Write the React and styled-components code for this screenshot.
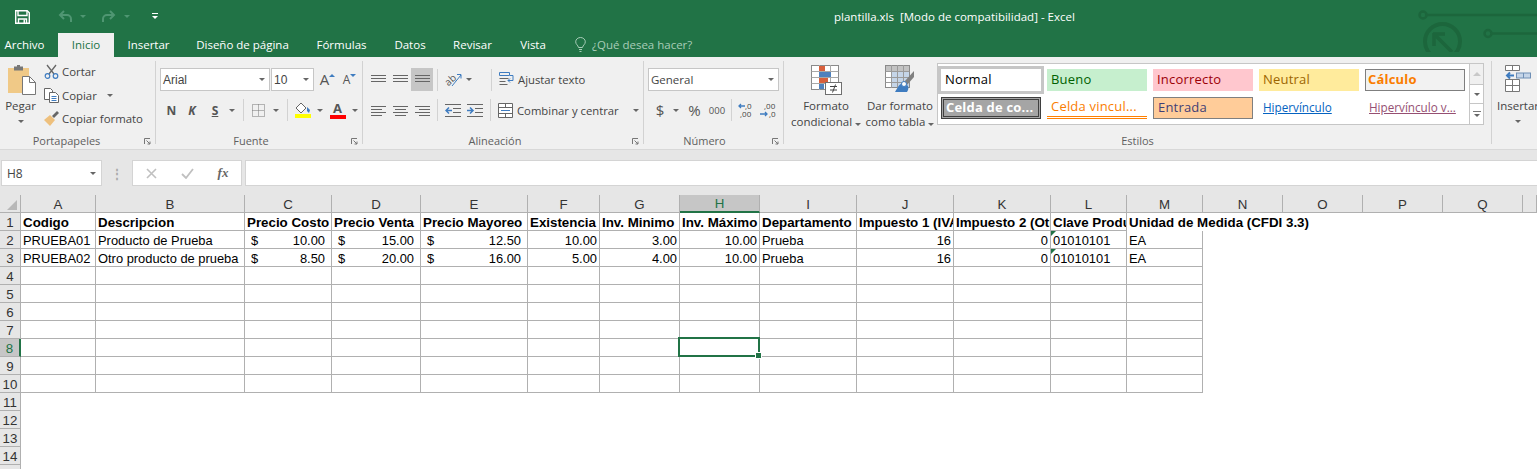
import styled, { createGlobalStyle } from "styled-components";

const UI_FONT = `"Open Sans", "Noto Sans", sans-serif`;
const CELL_FONT = `"Liberation Sans", Arial, sans-serif`;

const COLUMNS = [
  ["A", 75], ["B", 149], ["C", 87], ["D", 89], ["E", 107], ["F", 72], ["G", 80], ["H", 80], ["I", 97],
  ["J", 97], ["K", 97], ["L", 76], ["M", 76], ["N", 80], ["O", 80], ["P", 80], ["Q", 80], ["", 14],
];

const TITLES = [
  "Codigo", "Descripcion", "Precio Costo", "Precio Venta", "Precio Mayoreo", "Existencia", "Inv. Minimo",
  "Inv. Máximo", "Departamento", "Impuesto 1 (IVA)", "Impuesto 2 (Otro)", "Clave Producto", "Unidad de Medida (CFDI 3.3)",
];

const PRODUCTS = [
  ["PRUEBA01", "Producto de Prueba", "10.00", "15.00", "12.50", "10.00", "3.00", "10.00", "Prueba", "16", "0", "01010101", "EA"],
  ["PRUEBA02", "Otro producto de prueba", "8.50", "20.00", "16.00", "5.00", "4.00", "10.00", "Prueba", "16", "0", "01010101", "EA"],
];

const STYLES = [
  { label: "Normal", color: "#000", bg: "#fff", selected: true },
  { label: "Bueno", color: "#006100", bg: "#c6efce" },
  { label: "Incorrecto", color: "#9c0006", bg: "#ffc7ce" },
  { label: "Neutral", color: "#9c6500", bg: "#ffeb9c" },
  { label: "Cálculo", color: "#fa7d00", bg: "#f2f2f2", border: "1px solid #7f7f7f", bold: true, tight: true },
  { label: "Celda de co...", color: "#fff", bg: "#a5a5a5", border: "3px double #3f3f3f", bold: true, tight: true },
  { label: "Celda vincul...", color: "#fa7d00", bg: "#fff", under: "3px double #ff8001" },
  { label: "Entrada", color: "#3f3f76", bg: "#ffcc99", border: "1px solid #7f7f7f" },
  { label: "Hipervínculo", color: "#0563c1", bg: "#fff", link: true },
  { label: "Hipervínculo v...", color: "#954f72", bg: "#fff", link: true },
];

const GlobalStyle = createGlobalStyle`
  html, body {
    margin: 0;
    height: 100%;
    overflow: hidden;
    background: #e6e6e6;
  }
`;

const Page = styled.div`
  width: 1537px;
  height: 469px;
  overflow: hidden;
  background: #e6e6e6;
  font-family: ${UI_FONT};
  font-size: 11.4px;
  color: #444;
`;

const GreenHeader = styled.header`
  position: relative;
  height: 57px;
  background: #217346;
  overflow: hidden;
`;

const Circuit = styled.svg`
  position: absolute;
  right: 0;
  top: 0;
`;

const TitleBar = styled.div`
  display: flex;
  align-items: center;
  height: 33px;
  padding-left: 15px;
`;

const QuickSlot = styled.div`
  display: flex;
  align-items: center;
  margin-left: ${(p) => p.$ml || 0}px;
`;

const WindowTitle = styled.span`
  margin-left: 676px;
  color: #fff;
  font-size: 11.5px;
  white-space: pre;
`;

const Tabs = styled.nav`
  display: flex;
  height: 24px;
`;

const Tab = styled.div`
  display: flex;
  align-items: center;
  justify-content: center;
  box-sizing: border-box;
  width: ${(p) => p.$w}px;
  margin-right: ${(p) => p.$mr || 0}px;
  padding-bottom: 2px;
  font-size: 11.5px;
  color: ${(p) => (p.$active ? "#217346" : "#fff")};
  background: ${(p) => (p.$active ? "#f0f0f0" : "transparent")};
`;

const Search = styled.div`
  display: flex;
  align-items: center;
  gap: 6px;
  margin-left: 15px;
  padding-bottom: 2px;
  color: #a8cdb8;
  font-size: 11.5px;
`;

const Ribbon = styled.section`
  display: flex;
  box-sizing: border-box;
  height: 93px;
  padding: 4px 0 5px;
  background: #f0f0f0;
  border-bottom: 1px solid #d8d8d8;
`;

const Group = styled.div`
  display: flex;
  flex-direction: column;
  flex: none;
  box-sizing: border-box;
  width: ${(p) => p.$w}px;
  border-right: ${(p) => (p.$last ? "none" : "1px solid #d2d2d2")};
`;

const GroupBody = styled.div`
  display: flex;
  height: 72px;
`;

const Stack = styled.div`
  display: flex;
  flex-direction: column;
  padding: 7px 0 0 ${(p) => p.$pl || 0}px;
  gap: 7px;
`;

const GroupLabel = styled.div`
  position: relative;
  box-sizing: border-box;
  height: 12px;
  padding-right: ${(p) => p.$pr || 0}px;
  line-height: 18px;
  text-align: center;
  color: #5f5f5f;
  font-size: 11px;
`;

const Launcher = styled.svg`
  position: absolute;
  right: 4px;
  top: 6px;
`;

const BigButton = styled.div`
  display: flex;
  flex-direction: column;
  align-items: center;
  flex: none;
  width: ${(p) => p.$w}px;
  padding-top: 4px;
  line-height: 16px;
  white-space: nowrap;
  font-size: 11.5px;
`;

const BigIcon = styled.div`
  display: flex;
  align-items: flex-start;
  justify-content: center;
  height: 33px;
  margin-left: ${(p) => p.$ml || 0}px;
`;

const SmallColumn = styled.div`
  display: flex;
  flex-direction: column;
  gap: 0.5px;
  margin: -1px 0 0 3px;
`;

const SmallButton = styled.div`
  display: flex;
  align-items: center;
  gap: 3px;
  height: 23px;
  white-space: nowrap;
  font-size: 11.4px;
`;

const Row = styled.div`
  display: flex;
  align-items: center;
  height: ${(p) => p.$h || 23}px;
`;

const Slot = styled.div`
  display: flex;
  align-items: center;
  justify-content: center;
  flex: none;
  width: ${(p) => p.$w}px;
  height: 23px;
  background: ${(p) => (p.$on ? "#c6c6c6" : "transparent")};
  color: ${(p) => p.$color || "#555"};
  font-size: ${(p) => p.$size || 12}px;
  font-weight: ${(p) => (p.$bold ? 700 : 400)};
  font-style: ${(p) => (p.$italic ? "italic" : "normal")};
  text-decoration: ${(p) => (p.$under ? "underline" : "none")};
`;

const Sep = styled.div`
  flex: none;
  width: 1px;
  height: 22px;
  margin-left: ${(p) => p.$ml || 0}px;
  margin-right: ${(p) => p.$mr || 0}px;
  background: #d2d2d2;
`;

const Caret = styled.span`
  flex: none;
  display: inline-block;
  width: 0;
  height: 0;
  margin-left: ${(p) => p.$ml || 0}px;
  margin-top: ${(p) => p.$mt || 0}px;
  border-left: 3px solid transparent;
  border-right: 3px solid transparent;
  border-top: 3px solid ${(p) => p.$color || "#666"};
`;

const SizeCaret = styled.span`
  flex: none;
  width: 0;
  height: 0;
  margin-bottom: 9px;
  border-left: 3px solid transparent;
  border-right: 3px solid transparent;
  border-top: ${(p) => (p.$down ? "3px solid #3f7cc0" : "none")};
  border-bottom: ${(p) => (p.$down ? "none" : "3px solid #3f7cc0")};
`;

const Select = styled.div`
  display: flex;
  align-items: center;
  justify-content: space-between;
  flex: none;
  box-sizing: border-box;
  width: ${(p) => p.$w}px;
  height: 23px;
  margin-left: ${(p) => p.$ml || 0}px;
  padding: 0 4px 0 2px;
  background: #fff;
  border: 1px solid #c6c6c6;
  color: #444;
  font-size: 11.5px;
`;

const FontSelect = styled(Select)`
  font-family: ${CELL_FONT};
  font-size: 12px;
`;

const WideButton = styled.div`
  display: flex;
  align-items: center;
  gap: 4px;
  margin-left: 7px;
  white-space: nowrap;
  font-size: 11.3px;
`;

const WideLabel = styled.span`
  display: inline-block;
  width: ${(p) => p.$w}px;
`;

const LetterIcon = styled.span`
  color: #555;
  line-height: 1;
`;

const Swatch = styled.div`
  display: flex;
  flex-direction: column;
  align-items: center;
  width: 16px;
`;

const SwatchBar = styled.div`
  width: 16px;
  height: 4px;
  background: ${(p) => p.$color};
`;

const Gallery = styled.div`
  display: flex;
  flex: none;
  margin: 2px 0 0 5px;
  height: 62px;
`;

const StyleGrid = styled.div`
  display: grid;
  grid-template-columns: repeat(5, 100px);
  grid-auto-rows: 22px;
  gap: 6px;
  box-sizing: border-box;
  padding: 5px 4px 0 3px;
  background: #fff;
  border: 1px solid #c6c6c6;
`;

const StyleCell = styled.div`
  display: flex;
  align-items: center;
  box-sizing: border-box;
  padding-left: ${(p) => (p.$tight ? 2 : 4)}px;
  padding-bottom: 2px;
  white-space: nowrap;
  overflow: hidden;
  font-size: 13px;
  letter-spacing: 0.2px;
  color: ${(p) => p.$color};
  background: ${(p) => p.$bg};
  border: ${(p) => p.$border || "none"};
  border-bottom: ${(p) => p.$under || p.$border || "none"};
  font-weight: ${(p) => (p.$bold ? 700 : 400)};
  outline: ${(p) => (p.$selected ? "3px solid #c6c6c6" : "none")};
`;

const LinkText = styled.span`
  text-decoration: underline;
  font-size: 11.7px;
  letter-spacing: 0;
`;

const Scroller = styled.div`
  display: flex;
  flex-direction: column;
  flex: none;
  width: 14px;
`;

const ScrollButton = styled.div`
  display: flex;
  flex-direction: column;
  align-items: center;
  justify-content: center;
  gap: 2px;
  box-sizing: border-box;
  height: ${(p) => p.$h}px;
  background: ${(p) => (p.$off ? "#f0f0f0" : "#fff")};
  border: 1px solid #c6c6c6;
  border-left: none;
  border-top: ${(p) => (p.$first ? "1px solid #c6c6c6" : "none")};
`;

const ScrollUp = styled.span`
  width: 0;
  height: 0;
  border-left: 4px solid transparent;
  border-right: 4px solid transparent;
  border-bottom: 4px solid #c8c8c8;
`;

const ScrollLine = styled.span`
  width: 8px;
  height: 1px;
  background: #777;
`;

const FormulaBar = styled.div`
  display: flex;
  align-items: stretch;
  height: 26px;
  margin-top: 10px;
  padding-left: 1px;
`;

const NameBox = styled.div`
  display: flex;
  align-items: center;
  justify-content: space-between;
  box-sizing: border-box;
  width: 101px;
  padding: 0 5px;
  background: #fff;
  border: 1px solid #d4d4d4;
  font-size: 12px;
  color: #444;
`;

const Dots = styled.div`
  display: flex;
  align-items: center;
  justify-content: center;
  width: 30px;
  color: #aaa;
  font-size: 12px;
  font-weight: 700;
`;

const FunctionBox = styled.div`
  display: flex;
  align-items: center;
  box-sizing: border-box;
  width: 110px;
  background: #fff;
  border: 1px solid #d4d4d4;
`;

const FunctionSlot = styled.div`
  display: flex;
  align-items: center;
  justify-content: center;
  width: 36px;
  font-family: "Liberation Serif", serif;
  font-style: italic;
  font-weight: 700;
  font-size: 13px;
  color: #666;
`;

const FormulaInput = styled.div`
  flex: 1;
  margin-left: 3px;
  background: #fff;
  border: 1px solid #d4d4d4;
  border-right: none;
`;

const Sheet = styled.div`
  display: grid;
  grid-template-columns: 21px ${COLUMNS.map((c) => `${c[1]}px`).join(" ")};
  grid-auto-rows: 18px;
  margin-top: 9px;
  background: #fff;
  font-family: ${CELL_FONT};
  font-size: 12.9px;
  color: #000;
`;

const Corner = styled.div`
  display: flex;
  align-items: flex-end;
  justify-content: flex-end;
  box-sizing: border-box;
  padding: 0 3px 2px 0;
  background: #e6e6e6;
  border-right: 1px solid #b0b0b0;
  border-bottom: 1px solid #b0b0b0;
`;

const ColumnHead = styled.div`
  display: flex;
  align-items: center;
  justify-content: center;
  box-sizing: border-box;
  padding-top: 1px;
  font-size: 13.3px;
  color: ${(p) => (p.$active ? "#217346" : "#333")};
  background: ${(p) => (p.$active ? "#c6c6c6" : "#e6e6e6")};
  border-right: 1px solid #b0b0b0;
  border-bottom: ${(p) => (p.$active ? "2px solid #217346" : "1px solid #b0b0b0")};
`;

const RowHead = styled.div`
  display: flex;
  align-items: center;
  justify-content: center;
  box-sizing: border-box;
  padding-top: 1px;
  font-size: 13.3px;
  color: ${(p) => (p.$active ? "#217346" : "#333")};
  background: ${(p) => (p.$active ? "#c6c6c6" : "#e6e6e6")};
  border-right: ${(p) => (p.$active ? "2px solid #217346" : "1px solid #b0b0b0")};
  border-bottom: 1px solid #b0b0b0;
`;

const Cell = styled.div`
  position: relative;
  display: flex;
  align-items: center;
  justify-content: ${(p) => p.$justify || "flex-start"};
  box-sizing: border-box;
  padding: 1px 2px 0;
  white-space: nowrap;
  overflow: ${(p) => (p.$spill ? "visible" : "hidden")};
  font-weight: ${(p) => (p.$bold ? 700 : 400)};
  font-size: ${(p) => (p.$bold ? "13.33px" : "inherit")};
  border-right: ${(p) => (p.$line ? "1px solid #b0b0b0" : "none")};
  border-bottom: ${(p) => (p.$line ? "1px solid #b0b0b0" : "none")};
`;

const MoneyCell = styled(Cell)`
  justify-content: space-between;
  padding: 1px 6px 0;
`;

const FlaggedCell = styled(Cell)`
  &::before {
    content: "";
    position: absolute;
    left: 0;
    top: 0;
    border-top: 5px solid #217346;
    border-right: 5px solid transparent;
  }
`;

const SelectedCell = styled(Cell)`
  overflow: visible;
  &::before {
    content: "";
    position: absolute;
    left: -2px;
    top: -2px;
    right: -1px;
    bottom: -1px;
    border: 2px solid #217346;
    z-index: 1;
  }
  &::after {
    content: "";
    position: absolute;
    right: -3px;
    bottom: -3px;
    width: 7px;
    height: 7px;
    background: #217346;
    border: 1px solid #fff;
    box-sizing: border-box;
    z-index: 2;
  }
`;

const Blank = styled.div``;

const GalleryStyle = ({ s }) => (
  <StyleCell
    $color={s.color}
    $bg={s.bg}
    $border={s.border}
    $under={s.under}
    $bold={s.bold}
    $selected={s.selected}
    $tight={s.tight}
  >
    {s.link ? <LinkText>{s.label}</LinkText> : s.label}
  </StyleCell>
);

const LauncherIcon = () => (
  <Launcher width="7" height="7" viewBox="0 0 7 7" fill="none" stroke="#777">
    <path d="M.5 6V.5H6" />
    <path d="M2.5 2.5 6 6M6 3.5V6H3.5" />
  </Launcher>
);

const Lines = ({ widths, color = "#666", step = 3 }) => (
  <svg width="15" height="11" viewBox="0 0 15 11" stroke={color}>
    {widths.map(([x1, x2], i) => (
      <line key={i} x1={x1} x2={x2} y1={i * step + 1.5} y2={i * step + 1.5} />
    ))}
  </svg>
);

const CENTER = [[0, 15], [2, 13], [0, 15], [2, 13]];
const LEFT = [[0, 15], [0, 11], [0, 15], [0, 11]];
const RIGHT = [[0, 15], [4, 15], [0, 15], [4, 15]];
const EVEN = [[0, 15], [0, 15], [0, 15]];

const ConditionalIcon = () => (
  <svg width="31" height="30" viewBox="0 0 31 30">
    <rect x=".5" y=".5" width="27" height="24" fill="#fff" stroke="#8a8a8a" />
    <path d="M.5 6.5h27M.5 12.5h27M.5 18.5h27M8.5 0v25M19.5 0v25" stroke="#a8a8a8" />
    <rect x="8" y="1" width="6" height="5" fill="#d8603c" />
    <rect x="8" y="7" width="12" height="5" fill="#4f81bd" />
    <rect x="8" y="13" width="9" height="5" fill="#d8603c" />
    <rect x="8" y="19" width="5" height="5" fill="#4f81bd" />
    <rect x="14.5" y="17.5" width="16" height="12" fill="#fff" stroke="#6f6f6f" />
    <path d="M19 21.5h7M19 25h7M24.5 19.5l-3 8" stroke="#444" fill="none" />
  </svg>
);

const TableIcon = () => (
  <svg width="30" height="30" viewBox="0 0 30 30">
    <rect x=".5" y=".5" width="24" height="22" fill="#fff" stroke="#8a8a8a" />
    <rect x="1" y="1" width="23" height="5" fill="#c2c2c2" />
    <rect x="7" y="7" width="17" height="15" fill="#c5d5e8" />
    <path d="M.5 6.5h24M.5 12.5h24M.5 17.5h24M6.500 0v23M12.500 0v23M18.500 0v23" stroke="#9a9a9a" />
    <path d="M29 6l-10 11 3 3 7-8z" fill="#808080" />
    <path d="M18 18c-4 1-5 4-8 9h12c2-3 2-6-1-8z" fill="#3f7cc0" />
    <circle cx="19" cy="19" r="2.5" fill="#fff" stroke="#3f7cc0" />
  </svg>
);

const InsertIcon = () => (
  <svg width="26" height="28" viewBox="0 0 26 28">
    <path d="M.5.5h14v5h-14zM7.5.5v5M.5 14.5h14v12H.5zM.5 20.5h14M7.5 14.5v12" fill="#fff" stroke="#777" />
    <rect x="11.5" y="8" width="14" height="5" fill="#c5d5e8" stroke="#6f8fb5" />
    <path d="M18.5 8v5" stroke="#6f8fb5" />
    <path d="M9 10.5H2M5 7.5l-3 3 3 3" fill="none" stroke="#3f7cc0" strokeWidth="2" />
  </svg>
);

function SheetRow({ number, values }) {
  return (
    <>
      <RowHead>{number}</RowHead>
      {values.map((value, i) => {
        if (i >= 2 && i <= 4) {
          return (
            <MoneyCell key={i} $line>
              <span>$</span>
              <span>{value}</span>
            </MoneyCell>
          );
        }
        if (i === 11) return <FlaggedCell key={i} $line>{value}</FlaggedCell>;
        const right = (i >= 5 && i <= 7) || i === 9 || i === 10;
        return (
          <Cell key={i} $line $justify={right ? "flex-end" : "flex-start"}>{value}</Cell>
        );
      })}
      {COLUMNS.slice(13).map(([name]) => (
        <Blank key={name || "end"} />
      ))}
    </>
  );
}

function EmptyRow({ number }) {
  return (
    <>
      <RowHead $active={number === 8}>{number}</RowHead>
      {COLUMNS.slice(0, 13).map(([name]) =>
        number === 8 && name === "H" ? <SelectedCell key={name} $line /> : <Cell key={name} $line />
      )}
      {COLUMNS.slice(13).map(([name]) => (
        <Blank key={name || "end"} />
      ))}
    </>
  );
}

function OutsideRow({ number }) {
  return (
    <>
      <RowHead>{number}</RowHead>
      {COLUMNS.map(([name]) => (
        <Blank key={name || "end"} />
      ))}
    </>
  );
}

export default function App() {
  return (
    <Page>
      <GlobalStyle />
      <GreenHeader>
        <Circuit width="120" height="52" viewBox="0 0 120 52" fill="none" stroke="#1c663c" strokeWidth="2.5">
          <circle cx="6" cy="15" r="3.5" />
          <path d="M10 15h110" />
          <circle cx="71" cy="33.5" r="3.5" />
          <path d="M75 33.5h45" />
          <circle cx="25.5" cy="41.5" r="17.5" strokeWidth="4" />
          <path d="M16 34h12M17 33v13M18 35l17 17" strokeWidth="3.5" />
        </Circuit>
        <TitleBar>
          <svg width="15" height="14" viewBox="0 0 15 14" fill="none" stroke="#fff">
            <path d="M.7.7h11.5l2.1 2.1v10.5H.7z" strokeWidth="1.4" />
            <path d="M3 1v4.5h9V1" strokeWidth="1.4" />
            <path d="M3.5 13V9h8v4" strokeWidth="1.4" />
            <rect x="8.5" y="9.5" width="1.5" height="3.5" fill="#fff" stroke="none" />
          </svg>
          <QuickSlot $ml={28}>
            <svg width="15" height="13" viewBox="0 0 15 13" fill="none" stroke="#4f9672" strokeWidth="2">
              <path d="M6 1 2 5l4 4" />
              <path d="M2 5h7a4 4 0 0 1 4 4v3" />
            </svg>
          </QuickSlot>
          <QuickSlot $ml={7}>
            <Caret $color="#4f9672" />
          </QuickSlot>
          <QuickSlot $ml={15}>
            <svg width="15" height="13" viewBox="0 0 15 13" fill="none" stroke="#4f9672" strokeWidth="2">
              <path d="m9 1 4 4-4 4" />
              <path d="M13 5H6a4 4 0 0 0-4 4v3" />
            </svg>
          </QuickSlot>
          <QuickSlot $ml={8}>
            <Caret $color="#4f9672" />
          </QuickSlot>
          <QuickSlot $ml={22}>
            <svg width="6" height="7" viewBox="0 0 6 7" fill="#fff">
              <rect width="6" height="1" />
              <path d="M0 3h6L3 6z" />
            </svg>
          </QuickSlot>
          <WindowTitle>plantilla.xls  [Modo de compatibilidad] - Excel</WindowTitle>
        </TitleBar>
        <Tabs>
          <Tab $w={49} $mr={9}>Archivo</Tab>
          <Tab $w={56} $active>Inicio</Tab>
          <Tab $w={69}>Insertar</Tab>
          <Tab $w={119}>Diseño de página</Tab>
          <Tab $w={79}>Fórmulas</Tab>
          <Tab $w={58}>Datos</Tab>
          <Tab $w={67}>Revisar</Tab>
          <Tab $w={54}>Vista</Tab>
          <Search>
            <svg width="11" height="15" viewBox="0 0 11 15" fill="none" stroke="#a8cdb8">
              <path d="M3.5 10.5C3 8 .7 7.500.7 4.800a4.800 4.300 0 0 1 9.600 0c0 2.700-2.300 3.200-2.800 5.700z" />
              <path d="M4 12.500h3M4.500 14.500h2" />
            </svg>
            ¿Qué desea hacer?
          </Search>
        </Tabs>
      </GreenHeader>

      <Ribbon>
        <Group $w={156}>
          <GroupBody>
            <BigButton $w={41}>
              <BigIcon $ml={3}>
                <svg width="28" height="30" viewBox="0 0 28 30">
                  <path d="M0 3h21v25H0z" fill="#f0c987" />
                  <path d="M6 1.500h9v4H6z" fill="#777" />
                  <path d="M9 0h3v2H9z" fill="#777" />
                  <path d="M14.500 11.500h7l6 6v12h-13z" fill="#fff" stroke="#777" />
                  <path d="M21.500 11.500v6h6" fill="none" stroke="#777" />
                </svg>
              </BigIcon>
              Pegar
              <Caret $mt={6} />
            </BigButton>
            <SmallColumn>
              <SmallButton>
                <svg width="15" height="15" viewBox="0 0 15 15" fill="none">
                  <path d="M3 1l7 9M12 1l-7 9" stroke="#666" strokeWidth="1.300" />
                  <circle cx="3.500" cy="12" r="2.300" stroke="#3f7cc0" strokeWidth="1.200" />
                  <circle cx="11.500" cy="12" r="2.300" stroke="#3f7cc0" strokeWidth="1.200" />
                </svg>
                Cortar
              </SmallButton>
              <SmallButton>
                <svg width="15" height="15" viewBox="0 0 15 15" fill="#fff" stroke="#666">
                  <path d="M.5.500h6l2 2v9h-8z" />
                  <path d="M5.500 4.500h6l3 3v7h-9z" />
                  <path d="M7.500 8.500h5M7.500 10.500h5M7.500 12.500h5" stroke="#3f7cc0" />
                </svg>
                Copiar
                <Caret $ml={7} />
              </SmallButton>
              <SmallButton>
                <svg width="15" height="15" viewBox="0 0 15 15">
                  <path d="M0 9 6 4l5 5-5 6z" fill="#eec07d" />
                  <path d="m8 5 5-5 2 2-5 5z" fill="#666" />
                </svg>
                Copiar formato
              </SmallButton>
            </SmallColumn>
          </GroupBody>
          <GroupLabel $pr={22}>Portapapeles<LauncherIcon /></GroupLabel>
        </Group>

        <Group $w={207}>
          <GroupBody>
            <Stack $pl={4}>
              <Row>
                <FontSelect $w={110}>Arial<Caret /></FontSelect>
                <FontSelect $w={43} $ml={1}>10<Caret /></FontSelect>
                <Slot $w={27} $size={15}>
                  <LetterIcon>A</LetterIcon>
                  <SizeCaret />
                </Slot>
                <Slot $w={17} $size={12}>
                  <LetterIcon>A</LetterIcon>
                  <SizeCaret $down />
                </Slot>
              </Row>
              <Row $h={24}>
                <Slot $w={23} $bold>N</Slot>
                <Slot $w={18} $bold $italic>K</Slot>
                <Slot $w={28} $bold $under>S</Slot>
                <Caret />
                <Sep $ml={8} />
                <Slot $w={29}>
                  <svg width="13" height="13" viewBox="0 0 13 13" fill="none" stroke="#777" strokeDasharray="1 1">
                    <path d="M.5.500h12v12H.5zM.5 6.500h12M6.500.5v12" />
                  </svg>
                </Slot>
                <Caret />
                <Sep $ml={8} />
                <Slot $w={29}>
                  <Swatch>
                    <svg width="16" height="12" viewBox="0 0 16 12" fill="none">
                      <path d="M6 1 1 6l5 5 5-5z" stroke="#666" fill="#fff" />
                      <path d="M12 5l3 3-1 3-2-2z" fill="#3f7cc0" />
                    </svg>
                    <SwatchBar $color="#ffff00" />
                  </Swatch>
                </Slot>
                <Caret />
                <Slot $w={29} $size={13} $bold>
                  <Swatch>
                    <LetterIcon>A</LetterIcon>
                    <SwatchBar $color="#ff0000" />
                  </Swatch>
                </Slot>
                <Caret />
              </Row>
            </Stack>
          </GroupBody>
          <GroupLabel $pr={16}>Fuente<LauncherIcon /></GroupLabel>
        </Group>

        <Group $w={281}>
          <GroupBody>
            <Stack $pl={4}>
              <Row>
                <Slot $w={22}><Lines widths={EVEN} /></Slot>
                <Slot $w={22}><Lines widths={EVEN} /></Slot>
                <Slot $w={22} $on><Lines widths={EVEN} /></Slot>
                <Sep $ml={4} $mr={3} />
                <Slot $w={25}>
                  <svg width="17" height="16" viewBox="0 0 17 16" fill="none" stroke="#666">
                    <text x="0" y="12" fontSize="10" fill="#555" stroke="none" transform="rotate(-42 5 9)">ab</text>
                    <path d="M7 14 16 3M12 2.500h4v4" stroke="#3f7cc0" />
                  </svg>
                </Slot>
                <Caret />
                <Sep $ml={19} />
                <WideButton>
                  <svg width="15" height="15" viewBox="0 0 15 15" fill="none" stroke="#666">
                    <path d="M.5.500h10v3H.5z" stroke="#3f7cc0" />
                    <path d="M.5 6.500h9M.5 9.500h6M.5 12.500h8" />
                    <path d="M11 3.500h3v5H9M11 6.500l-2 2 2 2" stroke="#3f7cc0" />
                  </svg>
                  Ajustar texto
                </WideButton>
              </Row>
              <Row $h={24}>
                <Slot $w={22}><Lines widths={LEFT} /></Slot>
                <Slot $w={22}><Lines widths={CENTER} /></Slot>
                <Slot $w={22}><Lines widths={RIGHT} /></Slot>
                <Sep $ml={4} $mr={3} />
                <Slot $w={24}>
                  <svg width="16" height="13" viewBox="0 0 16 13" fill="none" stroke="#666">
                    <path d="M0 .500h16M0 12.500h16M8 4.500h8M8 8.500h8" />
                    <path d="M7 6.500H1M4 3.500l-3 3 3 3" stroke="#3f7cc0" strokeWidth="1.500" />
                  </svg>
                </Slot>
                <Slot $w={20}>
                  <svg width="16" height="13" viewBox="0 0 16 13" fill="none" stroke="#666">
                    <path d="M0 .500h16M0 12.500h16M8 4.500h8M8 8.500h8" />
                    <path d="M0 6.500h6M3 3.500l3 3-3 3" stroke="#3f7cc0" strokeWidth="1.500" />
                  </svg>
                </Slot>
                <Sep $ml={5} />
                <WideButton>
                  <svg width="15" height="15" viewBox="0 0 15 15" fill="#fff" stroke="#666">
                    <path d="M.5.500h14v14H.5zM.5 4.500h14M.5 10.500h14M7.500.5v4M7.500 10.500v4" />
                    <path d="M3 7.500h9" stroke="#3f7cc0" />
                  </svg>
                  <WideLabel $w={112}>Combinar y centrar</WideLabel>
                  <Caret />
                </WideButton>
              </Row>
            </Stack>
          </GroupBody>
          <GroupLabel $pr={16}>Alineación<LauncherIcon /></GroupLabel>
        </Group>

        <Group $w={140}>
          <GroupBody>
            <Stack $pl={4}>
              <Row>
                <Select $w={131}>General<Caret /></Select>
              </Row>
              <Row $h={24}>
                <Slot $w={24} $size={15}>$</Slot>
                <Caret $ml={1} />
                <Slot $w={31} $size={15}>%</Slot>
                <Slot $w={14} $size={9.5}>000</Slot>
                <Sep $ml={7} />
                <Slot $w={28}>
                  <svg width="17" height="16" viewBox="0 0 17 16">
                    <text x="7" y="7" fontSize="8" fill="#444">,0</text>
                    <text x="2" y="15" fontSize="8" fill="#444">,00</text>
                    <path d="M7 4H1M3 2 1 4l2 2" fill="none" stroke="#3f7cc0" strokeWidth="1.300" />
                  </svg>
                </Slot>
                <Slot $w={16}>
                  <svg width="16" height="16" viewBox="0 0 16 16">
                    <text x="4" y="7" fontSize="8" fill="#444">,00</text>
                    <text x="9" y="15" fontSize="8" fill="#444">,0</text>
                    <path d="M0 12h7M5 10l2 2-2 2" fill="none" stroke="#3f7cc0" strokeWidth="1.300" />
                  </svg>
                </Slot>
              </Row>
            </Stack>
          </GroupBody>
          <GroupLabel $pr={18}>Número<LauncherIcon /></GroupLabel>
        </Group>

        <Group $w={708}>
          <GroupBody>
            <BigButton $w={84}>
              <BigIcon><ConditionalIcon /></BigIcon>
              Formato
              <span>condicional <Caret /></span>
            </BigButton>
            <BigButton $w={64}>
              <BigIcon><TableIcon /></BigIcon>
              Dar formato
              <span>como tabla <Caret /></span>
            </BigButton>
            <Gallery>
              <StyleGrid>
                {STYLES.map((s) => (
                  <GalleryStyle key={s.label} s={s} />
                ))}
              </StyleGrid>
              <Scroller>
                <ScrollButton $h={22} $first $off><ScrollUp /></ScrollButton>
                <ScrollButton $h={19}><Caret /></ScrollButton>
                <ScrollButton $h={21}>
                  <ScrollLine />
                  <Caret />
                </ScrollButton>
              </Scroller>
            </Gallery>
          </GroupBody>
          <GroupLabel>Estilos</GroupLabel>
        </Group>

        <Group $w={45} $last>
          <GroupBody>
            <BigButton $w={52}>
              <BigIcon><InsertIcon /></BigIcon>
              Insertar
              <Caret $mt={6} />
            </BigButton>
          </GroupBody>
        </Group>
      </Ribbon>

      <FormulaBar>
        <NameBox>H8<Caret /></NameBox>
        <Dots>⋮</Dots>
        <FunctionBox>
          <FunctionSlot>
            <svg width="11" height="11" viewBox="0 0 11 11" stroke="#c0c0c0" strokeWidth="1.600">
              <path d="m1 1 9 9M10 1l-9 9" />
            </svg>
          </FunctionSlot>
          <FunctionSlot>
            <svg width="13" height="11" viewBox="0 0 13 11" fill="none" stroke="#c0c0c0" strokeWidth="1.800">
              <path d="m1 6 4 4 7-9" />
            </svg>
          </FunctionSlot>
          <FunctionSlot>fx</FunctionSlot>
        </FunctionBox>
        <FormulaInput />
      </FormulaBar>

      <Sheet>
        <Corner>
          <svg width="10" height="10" viewBox="0 0 10 10">
            <path d="M10 0v10H0z" fill="#b8b8b8" />
          </svg>
        </Corner>
        {COLUMNS.map(([name]) => (
          <ColumnHead key={name || "end"} $active={name === "H"}>{name}</ColumnHead>
        ))}

        <RowHead>1</RowHead>
        {TITLES.map((title, i) => (
          <Cell key={title} $bold $line={i < 12} $spill={i === 12}>{title}</Cell>
        ))}
        {COLUMNS.slice(13).map(([name]) => (
          <Blank key={name || "end"} />
        ))}

        {PRODUCTS.map((product, r) => (
          <SheetRow key={r} number={r + 2} values={product} />
        ))}

        {[4, 5, 6, 7, 8, 9, 10].map((n) => (
          <EmptyRow key={n} number={n} />
        ))}

        {[11, 12, 13, 14, 15].map((n) => (
          <OutsideRow key={n} number={n} />
        ))}
      </Sheet>
    </Page>
  );
}
